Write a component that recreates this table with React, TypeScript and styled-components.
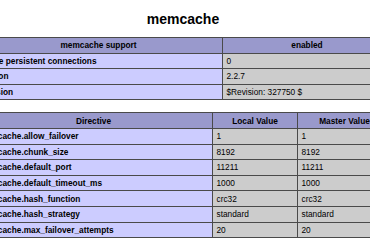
import React from "react";
import styled, { createGlobalStyle } from "styled-components";

const GlobalStyle = createGlobalStyle`
  html, body {
    margin: 0;
    padding: 0;
    background: #ffffff;
    overflow: hidden;
  }
  body {
    font-family: "Liberation Sans", Arial, sans-serif;
    color: #000000;
  }
`;

const Page = styled.div`
  width: 418px;
  margin-left: -26px;
  display: flex;
  flex-direction: column;
  align-items: center;
`;

const Title = styled.h2`
  margin: 11px 0 10px;
  font-size: 14px;
  line-height: 16px;
  font-weight: bold;
  text-align: center;
`;

const Table = styled.table`
  width: 100%;
  border-collapse: collapse;
  table-layout: fixed;
  margin-bottom: 12px;
`;

const Cell = styled.td`
  border: 1px solid #4a4a4a;
  font-size: 8.3px;
  line-height: 10px;
  padding: 2.3px 3.5px;
  vertical-align: baseline;
  white-space: nowrap;
  overflow: hidden;
`;

const Head = styled(Cell).attrs({ as: "th" })<{ $w?: number }>`
  background: #9999cc;
  font-weight: bold;
  text-align: center;
  width: ${({ $w }) => ($w ? `${$w}px` : "auto")};
`;

const Key = styled(Cell)`
  background: #ccccff;
  font-weight: bold;
  text-align: left;
`;

const Val = styled(Cell)`
  background: #cccccc;
  text-align: left;
`;

const info: [string, string][] = [
  ["Active persistent connections", "0"],
  ["Version", "2.2.7"],
  ["Revision", "$Revision: 327750 $"],
];

const directives: [string, string, string][] = [
  ["memcache.allow_failover", "1", "1"],
  ["memcache.chunk_size", "8192", "8192"],
  ["memcache.default_port", "11211", "11211"],
  ["memcache.default_timeout_ms", "1000", "1000"],
  ["memcache.hash_function", "crc32", "crc32"],
  ["memcache.hash_strategy", "standard", "standard"],
  ["memcache.max_failover_attempts", "20", "20"],
];

export default function App() {
  return (
    <>
      <GlobalStyle />
      <Page>
        <Title>memcache</Title>
        <Table>
          <tbody>
            <tr>
              <Head $w={240}>memcache support</Head>
              <Head>enabled</Head>
            </tr>
            {info.map(([k, v]) => (
              <tr key={k}>
                <Key>{k}</Key>
                <Val>{v}</Val>
              </tr>
            ))}
          </tbody>
        </Table>
        <Table>
          <tbody>
            <tr>
              <Head $w={230}>Directive</Head>
              <Head $w={77}>Local Value</Head>
              <Head>Master Value</Head>
            </tr>
            {directives.map(([k, local, master]) => (
              <tr key={k}>
                <Key>{k}</Key>
                <Val>{local}</Val>
                <Val>{master}</Val>
              </tr>
            ))}
          </tbody>
        </Table>
      </Page>
    </>
  );
}
